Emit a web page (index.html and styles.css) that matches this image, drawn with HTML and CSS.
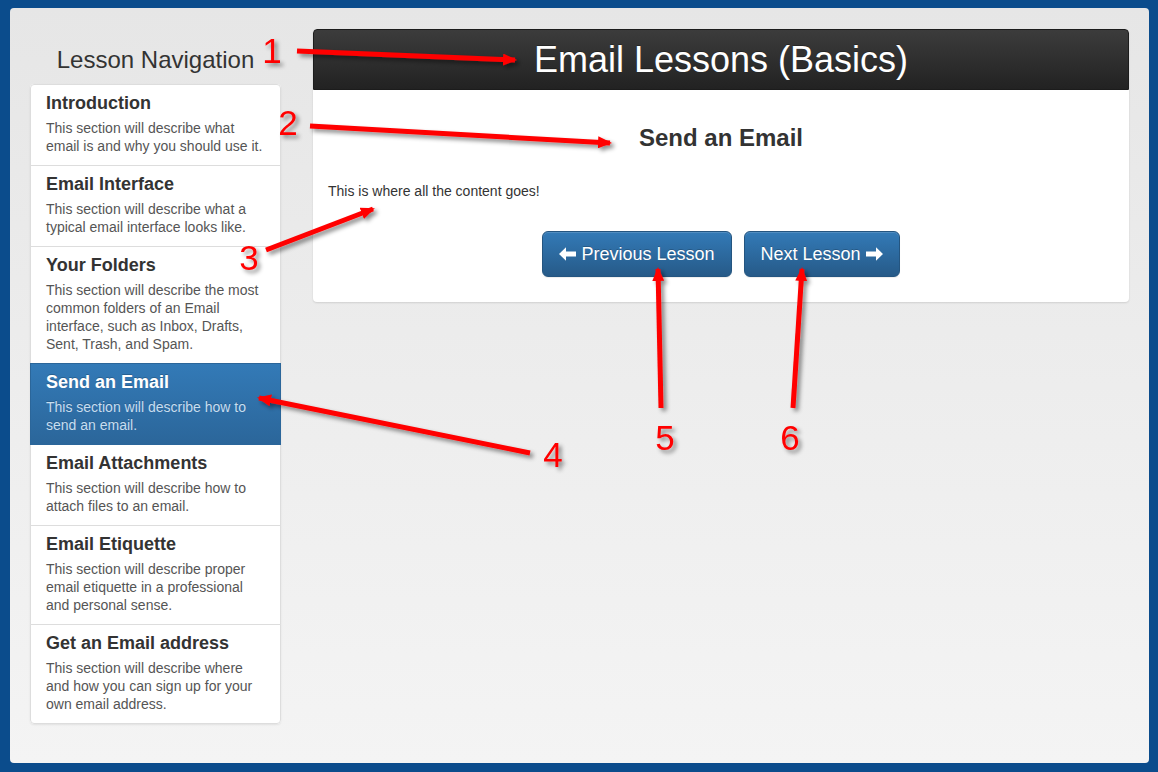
FILE: index.html
```html
<!DOCTYPE html>
<html lang="en">
<head>
<meta charset="utf-8">
<title>Email Lessons (Basics)</title>
<link rel="stylesheet" href="styles.css">
</head>
<body>
<div class="frame">
  <aside class="sidebar">
    <h3 class="nav-title">Lesson Navigation</h3>
    <div class="list-group">
      <a class="list-group-item">
        <h4 class="item-heading">Introduction</h4>
        <p class="item-text">This section will describe what email is and why you should use it.</p>
      </a>
      <a class="list-group-item">
        <h4 class="item-heading">Email Interface</h4>
        <p class="item-text">This section will describe what a typical email interface looks like.</p>
      </a>
      <a class="list-group-item">
        <h4 class="item-heading">Your Folders</h4>
        <p class="item-text">This section will describe the most common folders of an Email interface, such as Inbox, Drafts, Sent, Trash, and Spam.</p>
      </a>
      <a class="list-group-item active">
        <h4 class="item-heading">Send an Email</h4>
        <p class="item-text">This section will describe how to send an email.</p>
      </a>
      <a class="list-group-item">
        <h4 class="item-heading">Email Attachments</h4>
        <p class="item-text">This section will describe how to attach files to an email.</p>
      </a>
      <a class="list-group-item">
        <h4 class="item-heading">Email Etiquette</h4>
        <p class="item-text">This section will describe proper email etiquette in a professional and personal sense.</p>
      </a>
      <a class="list-group-item">
        <h4 class="item-heading">Get an Email address</h4>
        <p class="item-text">This section will describe where and how you can sign up for your own email address.</p>
      </a>
    </div>
  </aside>
  <main class="main">
    <div class="panel">
      <div class="panel-heading">
        <h1 class="page-title">Email Lessons (Basics)</h1>
      </div>
      <div class="panel-body">
        <h3 class="lesson-title">Send an Email</h3>
        <p class="lesson-text">This is where all the content goes!</p>
        <div class="pager">
          <a class="btn">
            <svg class="icon" width="17" height="14" viewBox="0 0 17 14"><path d="M0 7 L7 0.3 L7 4.4 L17 4.4 L17 9.6 L7 9.6 L7 13.7 Z" fill="#fff"/></svg>
            Previous Lesson
          </a>
          <a class="btn">
            Next Lesson
            <svg class="icon" width="17" height="14" viewBox="0 0 17 14"><path d="M17 7 L10 0.3 L10 4.4 L0 4.4 L0 9.6 L10 9.6 L10 13.7 Z" fill="#fff"/></svg>
          </a>
        </div>
      </div>
    </div>
  </main>
</div>

<svg class="annotations" width="1158" height="772" viewBox="0 0 1158 772">
  <defs>
    <filter id="shadow" x="-20%" y="-20%" width="140%" height="140%">
      <feDropShadow dx="3" dy="3" stdDeviation="2" flood-color="#000" flood-opacity="0.45"/>
    </filter>
    <marker id="head" viewBox="0 0 14 12" refX="12" refY="6" markerWidth="14" markerHeight="12" markerUnits="userSpaceOnUse" orient="auto">
      <path d="M0 0 L14 6 L0 12 Z" fill="#ff0000"/>
    </marker>
  </defs>
  <g filter="url(#shadow)" stroke="#ff0000" stroke-width="5" fill="none">
    <line x1="297" y1="51" x2="515" y2="60" marker-end="url(#head)"/>
    <line x1="310" y1="126" x2="610" y2="143" marker-end="url(#head)"/>
    <line x1="266" y1="250" x2="373" y2="209" marker-end="url(#head)"/>
    <line x1="530" y1="453" x2="259" y2="398" marker-end="url(#head)"/>
    <line x1="661" y1="408" x2="658" y2="269" marker-end="url(#head)"/>
    <line x1="793" y1="408" x2="802" y2="269" marker-end="url(#head)"/>
  </g>
  <g filter="url(#shadow)" class="numbers">
    <text x="272" y="63">1</text>
    <text x="288" y="135">2</text>
    <text x="249" y="270">3</text>
    <text x="553" y="467">4</text>
    <text x="665" y="450">5</text>
    <text x="790" y="450">6</text>
  </g>
</svg>
</body>
</html>
```

FILE: styles.css
```css
html, body {
  margin: 0;
  height: 100%;
}

body {
  background: #0b4c8c;
  font-family: "Liberation Sans", Arial, sans-serif;
  position: relative;
  overflow: hidden;
}

.frame {
  margin: 8px 9px 9px 10px;
  height: 755px;
  box-sizing: border-box;
  border-radius: 4px;
  background: linear-gradient(#e6e6e6, #f4f4f4);
  display: flex;
  align-items: flex-start;
  gap: 32px;
  padding: 21px 20px 0 20px;
}

/* Sidebar */
.sidebar {
  width: 251px;
  flex: none;
}

.nav-title {
  margin: 17.5px 0 11px;
  font-size: 24px;
  line-height: 26.4px;
  font-weight: normal;
  color: #333;
  text-align: center;
}

.list-group {
  background: #fff;
  border-radius: 4px;
  box-shadow: 0 1px 2px rgba(0, 0, 0, 0.075);
}

.list-group-item {
  display: block;
  position: relative;
  padding: 9px 12px 10px 15px;
  border: 1px solid #ddd;
  margin-bottom: -1px;
  color: #555;
  background: #fff;
}

.list-group-item:first-child {
  border-radius: 4px 4px 0 0;
}

.list-group-item:last-child {
  border-radius: 0 0 4px 4px;
  margin-bottom: 0;
}

.item-heading {
  margin: 0 0 5px;
  font-size: 18px;
  line-height: 19.8px;
  font-weight: bold;
  color: #333;
}

.item-text {
  margin: 0;
  font-size: 14px;
  line-height: 18.1px;
  color: #555;
}

.list-group-item.active {
  z-index: 2;
  background: linear-gradient(#337ab7, #2b669a);
  border-color: #2b669a;
  text-shadow: 0 -1px 0 #286090;
}

.list-group-item.active .item-heading {
  color: #fff;
}

.list-group-item.active .item-text {
  color: #c7ddef;
}

/* Main */
.main {
  flex: 1;
  min-width: 0;
}

.panel {
  background: #fff;
  border-radius: 4px;
  box-shadow: 0 1px 2px rgba(0, 0, 0, 0.12);
}

.panel-heading {
  height: 61px;
  box-sizing: border-box;
  display: flex;
  align-items: center;
  justify-content: center;
  background: linear-gradient(#3c3c3c, #222);
  border: 1px solid #1c1c1c;
  border-radius: 4px 4px 0 0;
}

.page-title {
  margin: 0;
  font-size: 36px;
  line-height: 1;
  font-weight: normal;
  color: #fff;
  text-shadow: 0 -1px 0 rgba(0, 0, 0, 0.25);
}

.panel-body {
  padding: 15px 15px 25px;
}

.lesson-title {
  margin: 20px 0 29.6px;
  font-size: 24px;
  line-height: 26.4px;
  font-weight: bold;
  color: #333;
  text-align: center;
}

.lesson-text {
  margin: 0 0 30px;
  font-size: 14px;
  line-height: 20px;
  color: #333;
}

.pager {
  display: flex;
  justify-content: center;
  gap: 12px;
}

.btn {
  display: inline-flex;
  align-items: center;
  gap: 5px;
  padding: 10px 16px;
  font-size: 18px;
  line-height: 24px;
  color: #fff;
  border: 1px solid #245580;
  border-radius: 6px;
  background: linear-gradient(#337ab7, #265a88);
  text-shadow: 0 -1px 0 rgba(0, 0, 0, 0.2);
  box-shadow: inset 0 1px 0 rgba(255, 255, 255, 0.15), 0 1px 1px rgba(0, 0, 0, 0.075);
  cursor: pointer;
}

.icon {
  display: block;
  flex: none;
}

/* Annotation overlay */
.annotations {
  position: absolute;
  top: 0;
  left: 0;
  pointer-events: none;
  z-index: 10;
}

.numbers text {
  font-family: "Liberation Sans", Arial, sans-serif;
  font-size: 35px;
  fill: #ff0000;
  text-anchor: middle;
}
```
